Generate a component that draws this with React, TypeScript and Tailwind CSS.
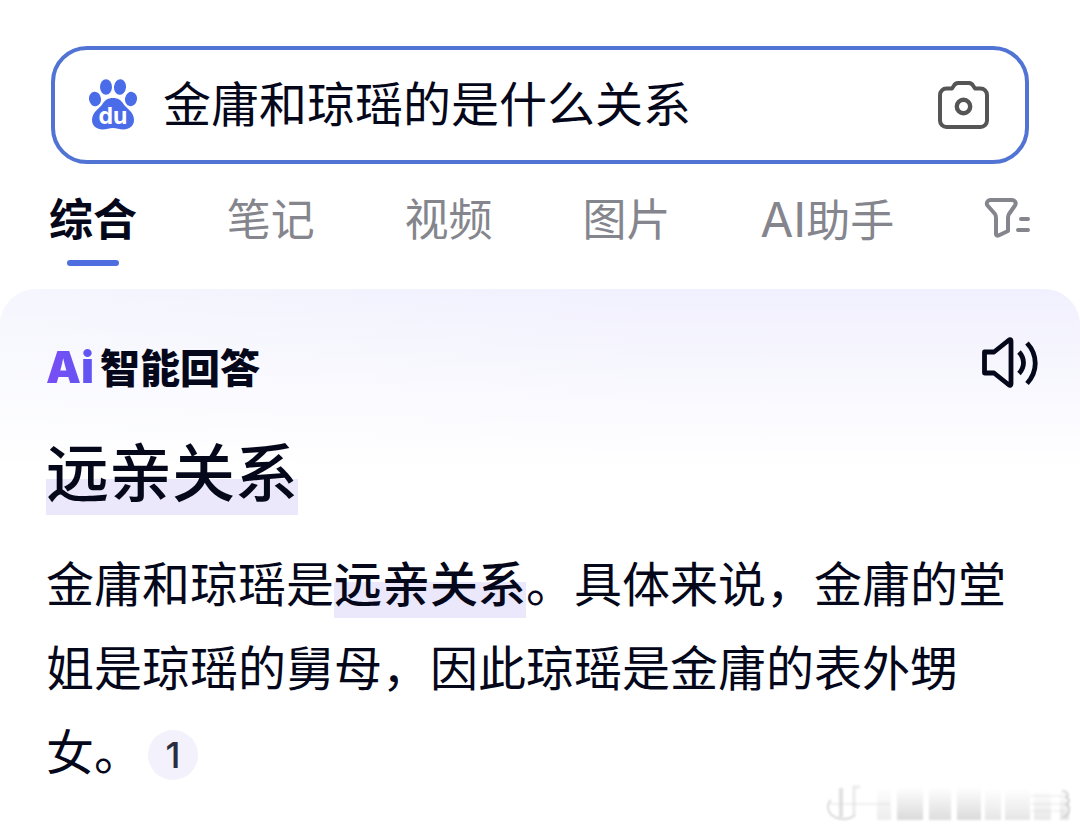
import { useState } from "react";

const TABS = ["综合", "笔记", "视频", "图片", "AI助手"];

const MARK = "pb-[4px] bg-[linear-gradient(#ece8fc,#ece8fc)] bg-bottom bg-no-repeat bg-[length:100%_36px]";

function PawLogo() {
  return (
    <svg width="48" height="52" viewBox="0 0 48 52" fill="#4a6ce8" className="shrink-0" aria-hidden="true">
      <ellipse cx="6" cy="20" rx="6" ry="7.2" transform="rotate(-8 6 20)" />
      <ellipse cx="17" cy="8" rx="6" ry="7.8" />
      <ellipse cx="31" cy="8" rx="6" ry="7.8" transform="rotate(6 31 8)" />
      <ellipse cx="42" cy="20" rx="6" ry="7.2" transform="rotate(10 42 20)" />
      <path d="M24 19c5 0 8 2 10.500 6 3 4.500 10.500 8 10.500 16 0 6-5 9.500-10.500 9.500-4 0-7-1.500-10.500-1.500S17.500 50.500 13.500 50.500C8 50.500 3 47 3 41c0-8 7.500-11.500 10.500-16 2.500-4 5.500-6 10.500-6z" />
      <text x="24" y="45" fill="#fff" fontSize="23" fontWeight="700" textAnchor="middle" fontFamily="Inter, sans-serif">du</text>
    </svg>
  );
}

function CameraIcon() {
  return (
    <svg width="51" height="48" viewBox="0 0 51 48" fill="none" stroke="#555" strokeWidth="4" strokeLinejoin="round">
      <path d="M8.500 7.500H14l2-3A5 5 0 0120 2h11a5 5 0 014 2.500l2 3h5.500A6.500 6.500 0 0149 14v25.500a6.500 6.500 0 01-6.500 6.500h-34A6.500 6.500 0 012 39.500V14a6.500 6.500 0 016.500-6.500z" />
      <circle cx="25.500" cy="25.500" r="6.700" strokeWidth="4.400" />
    </svg>
  );
}

function FilterIcon() {
  return (
    <svg width="46" height="42" viewBox="0 0 46 42" fill="none" stroke="#85868d" strokeWidth="4" strokeLinecap="round" strokeLinejoin="round">
      <path d="M6 3h22a3.500 3.500 0 013 5.500L25 17c-1 1.500-1 2.500-1 4v13l-9.500 4.500c-1.200.5-2.500 0-2.500-1.500V21c0-1.500 0-2.500-1-4L3.500 8.500A3.500 3.500 0 016 3z" />
      <path d="M37 22h7M34 33h10" />
    </svg>
  );
}

function SpeakerIcon() {
  return (
    <svg width="57" height="52" viewBox="0 0 57 52" fill="none" stroke="#05071a" strokeWidth="4.800" strokeLinejoin="round">
      <path d="M3.500 15h9.500L28 3c1-.8 2-.3 2 1v43c0 1.300-1 1.800-2 1L13 36H3.500z" />
      <path d="M38 15c6 6.500 6 15 0 21.500" />
      <path d="M46 6c11 12 11 28.500 0 40.500" />
    </svg>
  );
}

// faded account stamp in the corner
function Stamp() {
  return (
    <svg width="246" height="40" viewBox="0 0 246 40" className="absolute right-2 bottom-2" aria-hidden="true">
      <defs>
        <linearGradient id="fade" x1="0" y1="0" x2="0" y2="1">
          <stop offset="0" stopColor="#fff" />
          <stop offset="1" stopColor="#dadada" />
        </linearGradient>
        <filter id="soft" x="-10%" y="-10%" width="120%" height="120%">
          <feGaussianBlur stdDeviation="1" />
        </filter>
      </defs>
      <g filter="url(#soft)" fill="url(#fade)">
        <rect x="51" y="4" width="14" height="32" opacity=".5" />
        <rect x="71" y="3" width="26" height="33" />
        <rect x="103" y="3" width="22" height="33" opacity=".9" />
        <rect x="131" y="3" width="24" height="33" />
        <rect x="159" y="4" width="16" height="32" opacity=".7" />
        <rect x="179" y="4" width="25" height="32" opacity=".7" />
        <rect x="208" y="6" width="17" height="30" opacity=".6" />
        <rect x="234" y="6" width="9" height="30" opacity=".7" />
      </g>
      <g filter="url(#soft)" fill="none" stroke="#ccc">
        <path d="M5 16c-6 5-4 18 12 19 6 0 9-1 12-4" strokeWidth="1.500" />
        <path d="M2 20h62" strokeWidth="2" opacity=".3" />
        <path d="M15 4v29" strokeWidth="4" opacity=".6" />
        <path d="M28 32V3h6" strokeWidth="3" opacity=".4" />
        <path d="M236 7c6 0 7 4 4 6 4 2 4 6 0 7 5 3 4 12-3 13" strokeWidth="1.500" />
        <path d="M205 12h34M205 20h34M205 27h34" strokeWidth="1.500" opacity=".3" />
      </g>
    </svg>
  );
}

export default function App() {
  const [query, setQuery] = useState("金庸和琼瑶的是什么关系");
  const [active, setActive] = useState("综合");

  return (
    <div className="relative min-h-screen bg-white text-[#05071a] font-['Inter','Noto_Sans_CJK_SC',sans-serif]">
      <header className="px-[51px] pt-[46px]">
        <form
          onSubmit={(e) => e.preventDefault()}
          className="flex items-center h-[118px] rounded-[36px] border-4 border-[#5173d3] pl-[34px] pr-9"
        >
          <PawLogo />
          <input
            type="text"
            aria-label="搜索"
            value={query}
            onChange={(e) => setQuery(e.target.value)}
            className="flex-1 min-w-0 ml-[26px] h-20 pb-2 text-[48px] leading-[72px] outline-none"
          />
          <button type="button" aria-label="拍照搜索">
            <CameraIcon />
          </button>
        </form>
      </header>

      <nav className="flex items-start justify-between h-[125px] pl-[49px] pr-[50px] pt-6">
        {TABS.map((tab) => (
          <button
            key={tab}
            type="button"
            onClick={() => setActive(tab)}
            className={`flex flex-col items-center whitespace-nowrap text-[44px] leading-[64px] ${
              tab === active ? "font-bold" : "text-[#85868d]"
            }`}
          >
            {tab.startsWith("AI") ? (
              <span>
                <span className="text-[48px]">AI</span>
                {tab.slice(2)}
              </span>
            ) : (
              tab
            )}
            {tab === active && <span className="mt-2 h-[6px] w-[52px] rounded-full bg-[#4e6ee0]" />}
          </button>
        ))}
        <button type="button" aria-label="筛选" className="mt-[9px]">
          <FilterIcon />
        </button>
      </nav>

      <main className="rounded-t-[36px] bg-[linear-gradient(to_bottom,transparent,white_180px),linear-gradient(to_right,#f5f6fe,#f1f0fe_60%)] px-[46px] pt-12">
        <div className="flex items-start justify-between">
          <h2 className="flex items-baseline gap-[6px] mt-1 text-[40px] leading-[52px] font-black">
            <span className="bg-linear-to-r from-[#7a4df5] to-[#5f55f2] bg-clip-text text-[44px] text-transparent">Ai</span>
            <span>智能回答</span>
          </h2>
          <button type="button" aria-label="朗读" className="-mr-1">
            <SpeakerIcon />
          </button>
        </div>

        <h1 className="mt-8 text-[63px] leading-[92px] font-medium">
          <span className={MARK}>远亲关系</span>
        </h1>

        <p className="mt-6 text-[48px] leading-[84px]">
          金庸和琼瑶是<strong className={`font-medium ${MARK}`}>远亲关系</strong>。具体来说，金庸的堂姐是琼瑶的舅母，因此琼瑶是金庸的表外甥女。
          <a
            href="#source-1"
            className="inline-flex items-center justify-center align-middle ml-[6px] mb-1 size-[50px] rounded-full bg-[#f2f1fc] text-[36px] leading-none font-medium text-[#2b2c3d]"
          >
            1
          </a>
        </p>
      </main>

      <Stamp />
    </div>
  );
}
